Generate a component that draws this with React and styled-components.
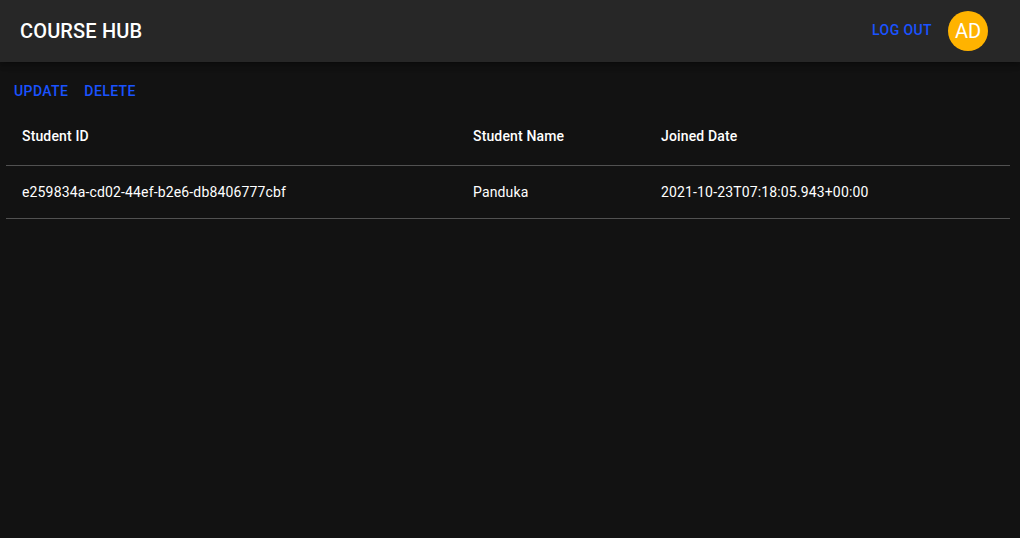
import React from "react";
import styled, { createGlobalStyle } from "styled-components";

const GlobalStyle = createGlobalStyle`
  html, body {
    margin: 0;
    padding: 0;
    background: #121212;
    color: #fff;
    font-family: Roboto, "Helvetica Neue", Arial, sans-serif;
    -webkit-font-smoothing: antialiased;
  }
  * {
    box-sizing: border-box;
  }
`;

const Page = styled.div`
  min-height: 538px;
  background: #121212;
`;

const AppBar = styled.header`
  height: 62px;
  background: #272727;
  display: flex;
  align-items: center;
  justify-content: space-between;
  padding: 0 32px 0 20px;
  box-shadow: 0 2px 4px -1px rgba(0, 0, 0, 0.2), 0 4px 5px 0 rgba(0, 0, 0, 0.14),
    0 1px 10px 0 rgba(0, 0, 0, 0.12);
`;

const Brand = styled.h1`
  margin: 0;
  font-size: 20px;
  font-weight: 500;
  letter-spacing: 0.15px;
  line-height: 1.6;
  color: #fff;
`;

const Right = styled.div`
  display: flex;
  align-items: center;
  gap: 8px;
`;

const TextButton = styled.button`
  border: none;
  background: transparent;
  color: #1a53ff;
  font-family: Roboto, Arial, sans-serif;
  font-size: 14px;
  font-weight: 500;
  letter-spacing: 0.4px;
  text-transform: uppercase;
  line-height: 1.75;
  padding: 6px 8px;
  min-width: 64px;
  border-radius: 4px;
  cursor: pointer;
`;

const LogoutButton = styled(TextButton)`
  padding: 5px 8px 7px;
`;

const Avatar = styled.div`
  width: 40px;
  height: 40px;
  border-radius: 50%;
  background: #ffb300;
  color: #fff;
  display: flex;
  align-items: center;
  justify-content: center;
  font-size: 20px;
  font-weight: 400;
`;

const Content = styled.main`
  padding: 11px 10px 0 6px;
`;

const Actions = styled.div`
  display: flex;
  height: 36px;
`;

const Table = styled.table`
  width: 100%;
  border-collapse: collapse;
  table-layout: fixed;
`;

const Cell = styled.td`
  padding: ${(p) => (p.$head ? "15px 16px 17px" : "16px")};
  text-align: left;
  font-size: 14px;
  letter-spacing: 0.15px;
  color: #fff;
  border-bottom: 1px solid #515151;
  width: ${(p) => p.$w || "auto"};
  font-weight: ${(p) => (p.$head ? 500 : 400)};
  line-height: ${(p) => (p.$head ? "24px" : "20px")};
  white-space: nowrap;
`;

const students = [
  {
    id: "e259834a-cd02-44ef-b2e6-db8406777cbf",
    name: "Panduka",
    joined: "2021-10-23T07:18:05.943+00:00",
  },
];

export default function App() {
  return (
    <Page>
      <GlobalStyle />
      <AppBar>
        <Brand>COURSE HUB</Brand>
        <Right>
          <LogoutButton>Log out</LogoutButton>
          <Avatar>AD</Avatar>
        </Right>
      </AppBar>
      <Content>
        <Actions>
          <TextButton>Update</TextButton>
          <TextButton>Delete</TextButton>
        </Actions>
        <Table>
          <thead>
            <tr>
              <Cell as="th" $head $w="451px">Student ID</Cell>
              <Cell as="th" $head $w="188px">Student Name</Cell>
              <Cell as="th" $head>Joined Date</Cell>
            </tr>
          </thead>
          <tbody>
            {students.map((s) => (
              <tr key={s.id}>
                <Cell>{s.id}</Cell>
                <Cell>{s.name}</Cell>
                <Cell>{s.joined}</Cell>
              </tr>
            ))}
          </tbody>
        </Table>
      </Content>
    </Page>
  );
}
